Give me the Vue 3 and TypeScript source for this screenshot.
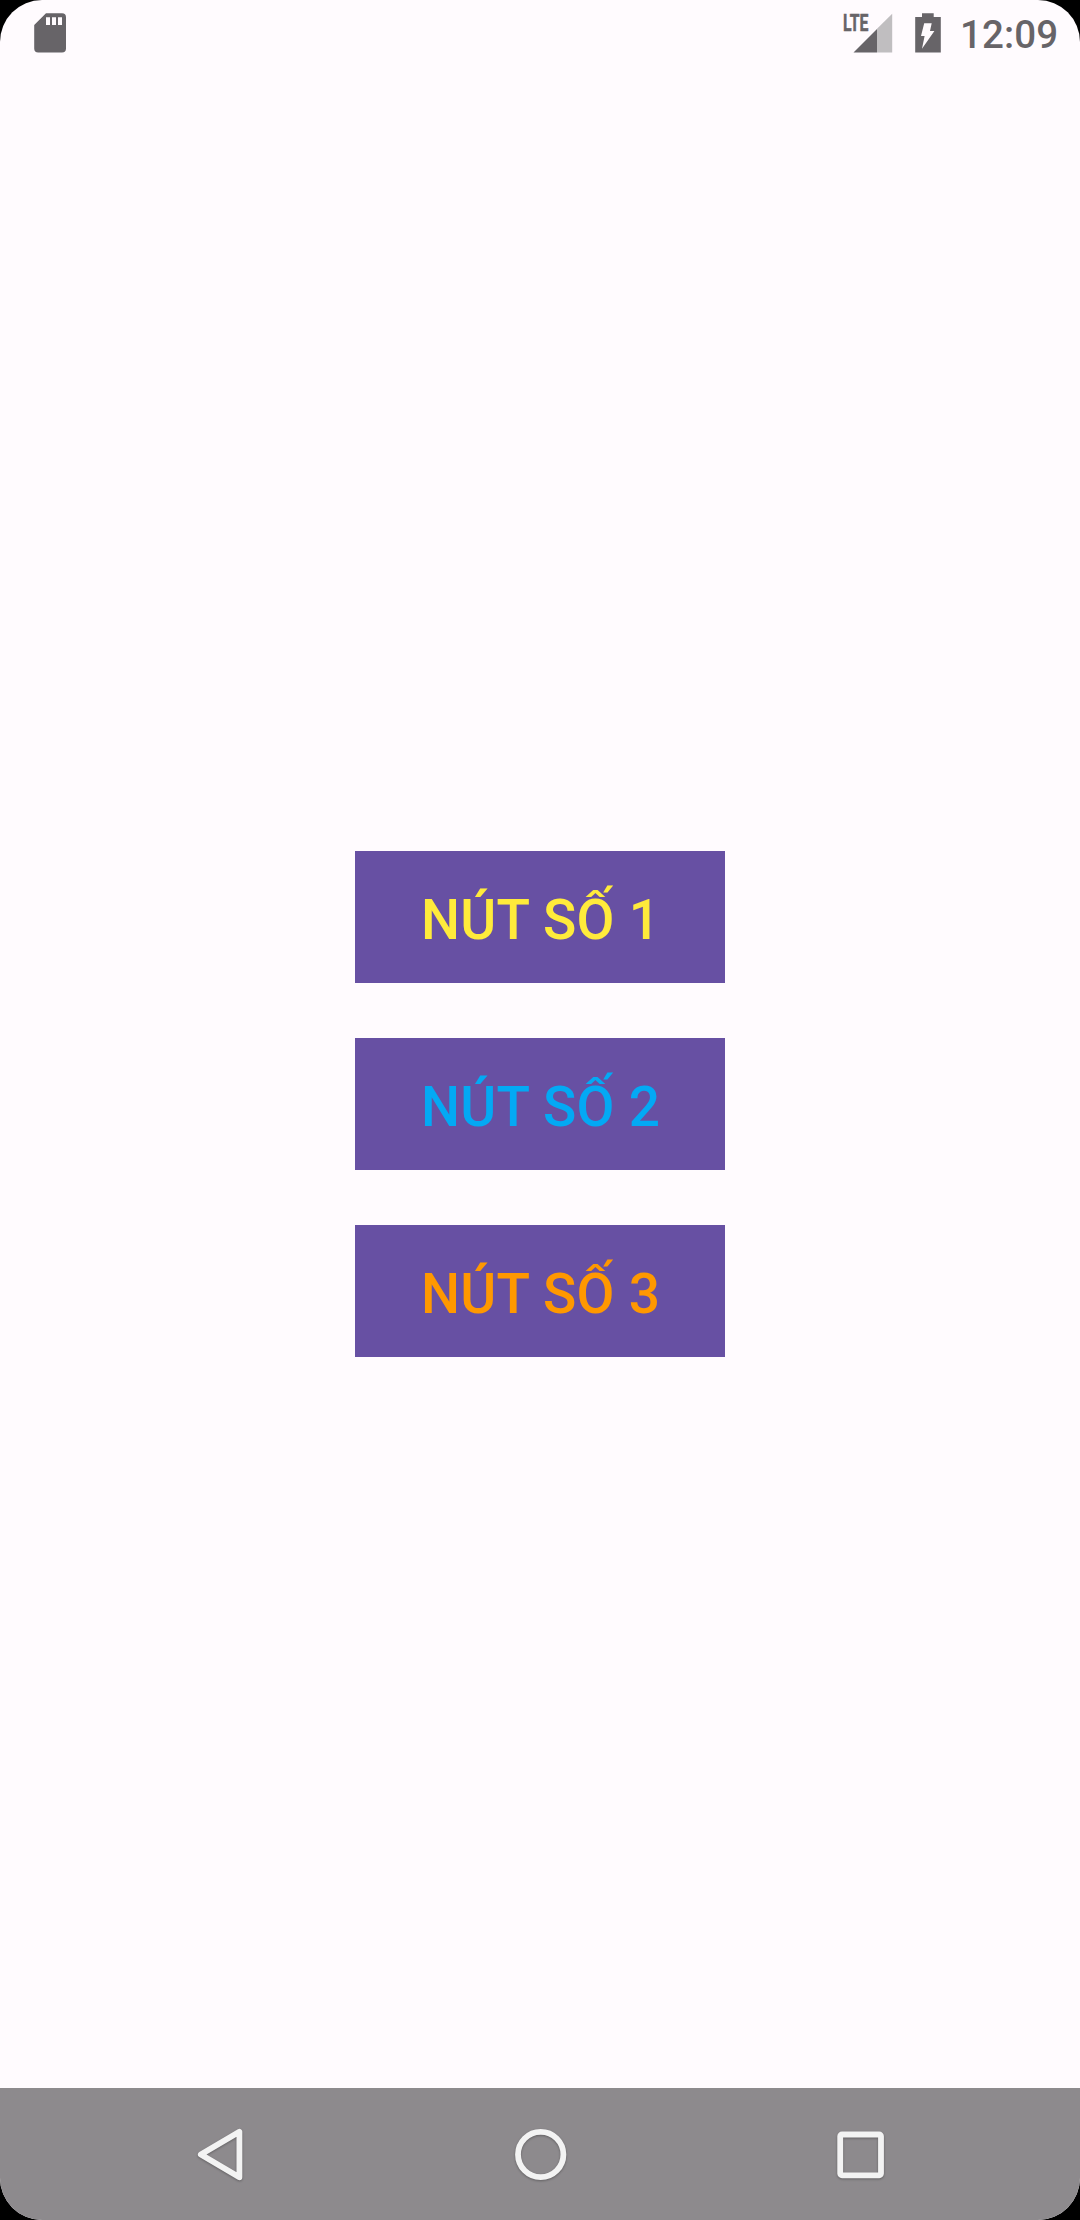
<script setup lang="ts">
interface ActionButton {
  label: string
  color: string
}

const buttons: ActionButton[] = [
  { label: 'NÚT SỐ 1', color: '#ffeb3b' },
  { label: 'NÚT SỐ 2', color: '#03a9f4' },
  { label: 'NÚT SỐ 3', color: '#ff9800' },
]
</script>

<template>
  <div class="screen">
    <header class="status-bar">
      <svg class="sd-card" width="32" height="40" viewBox="0 0 32 40">
        <path
          fill="#676468"
          fill-rule="evenodd"
          d="M12 0.3H28A4 4 0 0 1 32 4.3V35.5A4 4 0 0 1 28 39.5H4.2A4 4 0 0 1 0.2 35.5V12ZM12 4.2V12H16V4.2ZM18 4.2V12H22V4.2ZM24 4.2V12H28V4.2Z"
        />
      </svg>
      <div class="status-right">
        <svg class="signal" width="50" height="40" viewBox="0 0 50 40">
          <text class="lte" x="0" y="17.8" textLength="25.5" lengthAdjust="spacingAndGlyphs">LTE</text>
          <path fill="#c0bec0" d="M34 15.8L49.2 0.8V39.5H34Z" />
          <path fill="#676468" d="M10.5 39.5L34 16V39.5Z" />
        </svg>
        <svg class="battery" width="26" height="40" viewBox="0 0 26 40">
          <path fill="#676468" d="M7 0.3H18.7V4H25.8V39.5H0.2V4H7Z" />
          <path fill="#fffbfe" d="M9.2 10.3H16.7L15 18H19.4L7 35.8L9.6 23H6Z" />
        </svg>
        <span class="clock">12:09</span>
      </div>
    </header>

    <main class="content">
      <button
        v-for="button in buttons"
        :key="button.label"
        class="action"
        type="button"
        :style="{ color: button.color }"
      >
        {{ button.label }}
      </button>
    </main>

    <nav class="nav-bar">
      <svg class="nav-icon" width="66" height="66" viewBox="0 0 66 66">
        <path d="M13.8 33.5L52.4 10.7V56.3Z" />
      </svg>
      <svg class="nav-icon" width="66" height="66" viewBox="0 0 66 66">
        <circle cx="33.7" cy="33.5" r="22.7" />
      </svg>
      <svg class="nav-icon" width="66" height="66" viewBox="0 0 66 66">
        <rect x="13.2" y="13.5" width="40.8" height="40.8" rx="1.8" />
      </svg>
    </nav>
  </div>
</template>

<style>
body {
  margin: 0;
  background: #000;
}
</style>

<style scoped>
.screen {
  display: flex;
  flex-direction: column;
  width: 1080px;
  height: 2220px;
  overflow: hidden;
  border-radius: 42px;
  background: #fffbfe;
  font-family: Roboto, sans-serif;
}

.status-bar {
  display: flex;
  justify-content: space-between;
  height: 66px;
  padding-left: 34px;
}

.sd-card,
.signal,
.battery {
  display: block;
  flex: none;
  margin-top: 13px;
}

.status-right {
  display: flex;
  width: 237px;
}

.signal {
  overflow: visible;
}

.lte {
  fill: #676468;
  stroke: #676468;
  stroke-width: 0.5;
  font-size: 23px;
  font-weight: 700;
}

.battery {
  margin-left: 22px;
}

.clock {
  margin-left: 19px;
  margin-top: 12px;
  color: #676468;
  font-size: 38.5px;
  font-weight: 500;
  letter-spacing: 0.1px;
  line-height: 46px;
}

.content {
  display: flex;
  flex: 1;
  flex-direction: column;
  align-items: center;
  justify-content: center;
  gap: 55px;
  padding-bottom: 12px;
  padding-top: 66px;
}

.action {
  width: 370px;
  height: 132px;
  padding: 6px 0 0 66px;
  border: 0;
  border-radius: 0;
  background: #6750a3;
  font-family: inherit;
  font-size: 55px;
  font-weight: 500;
  letter-spacing: 0.275px;
  line-height: 64px;
  text-align: left;
  white-space: nowrap;
}

.nav-bar {
  display: flex;
  align-items: center;
  justify-content: space-between;
  height: 132px;
  padding: 0 187px;
  box-sizing: border-box;
  background: #8d8a8d;
}

.nav-icon {
  display: block;
  fill: none;
  stroke: #f3f3f3;
  stroke-width: 5.8;
  stroke-linejoin: round;
  filter: drop-shadow(0 1px 1px rgba(0, 0, 0, 0.3));
}
</style>
